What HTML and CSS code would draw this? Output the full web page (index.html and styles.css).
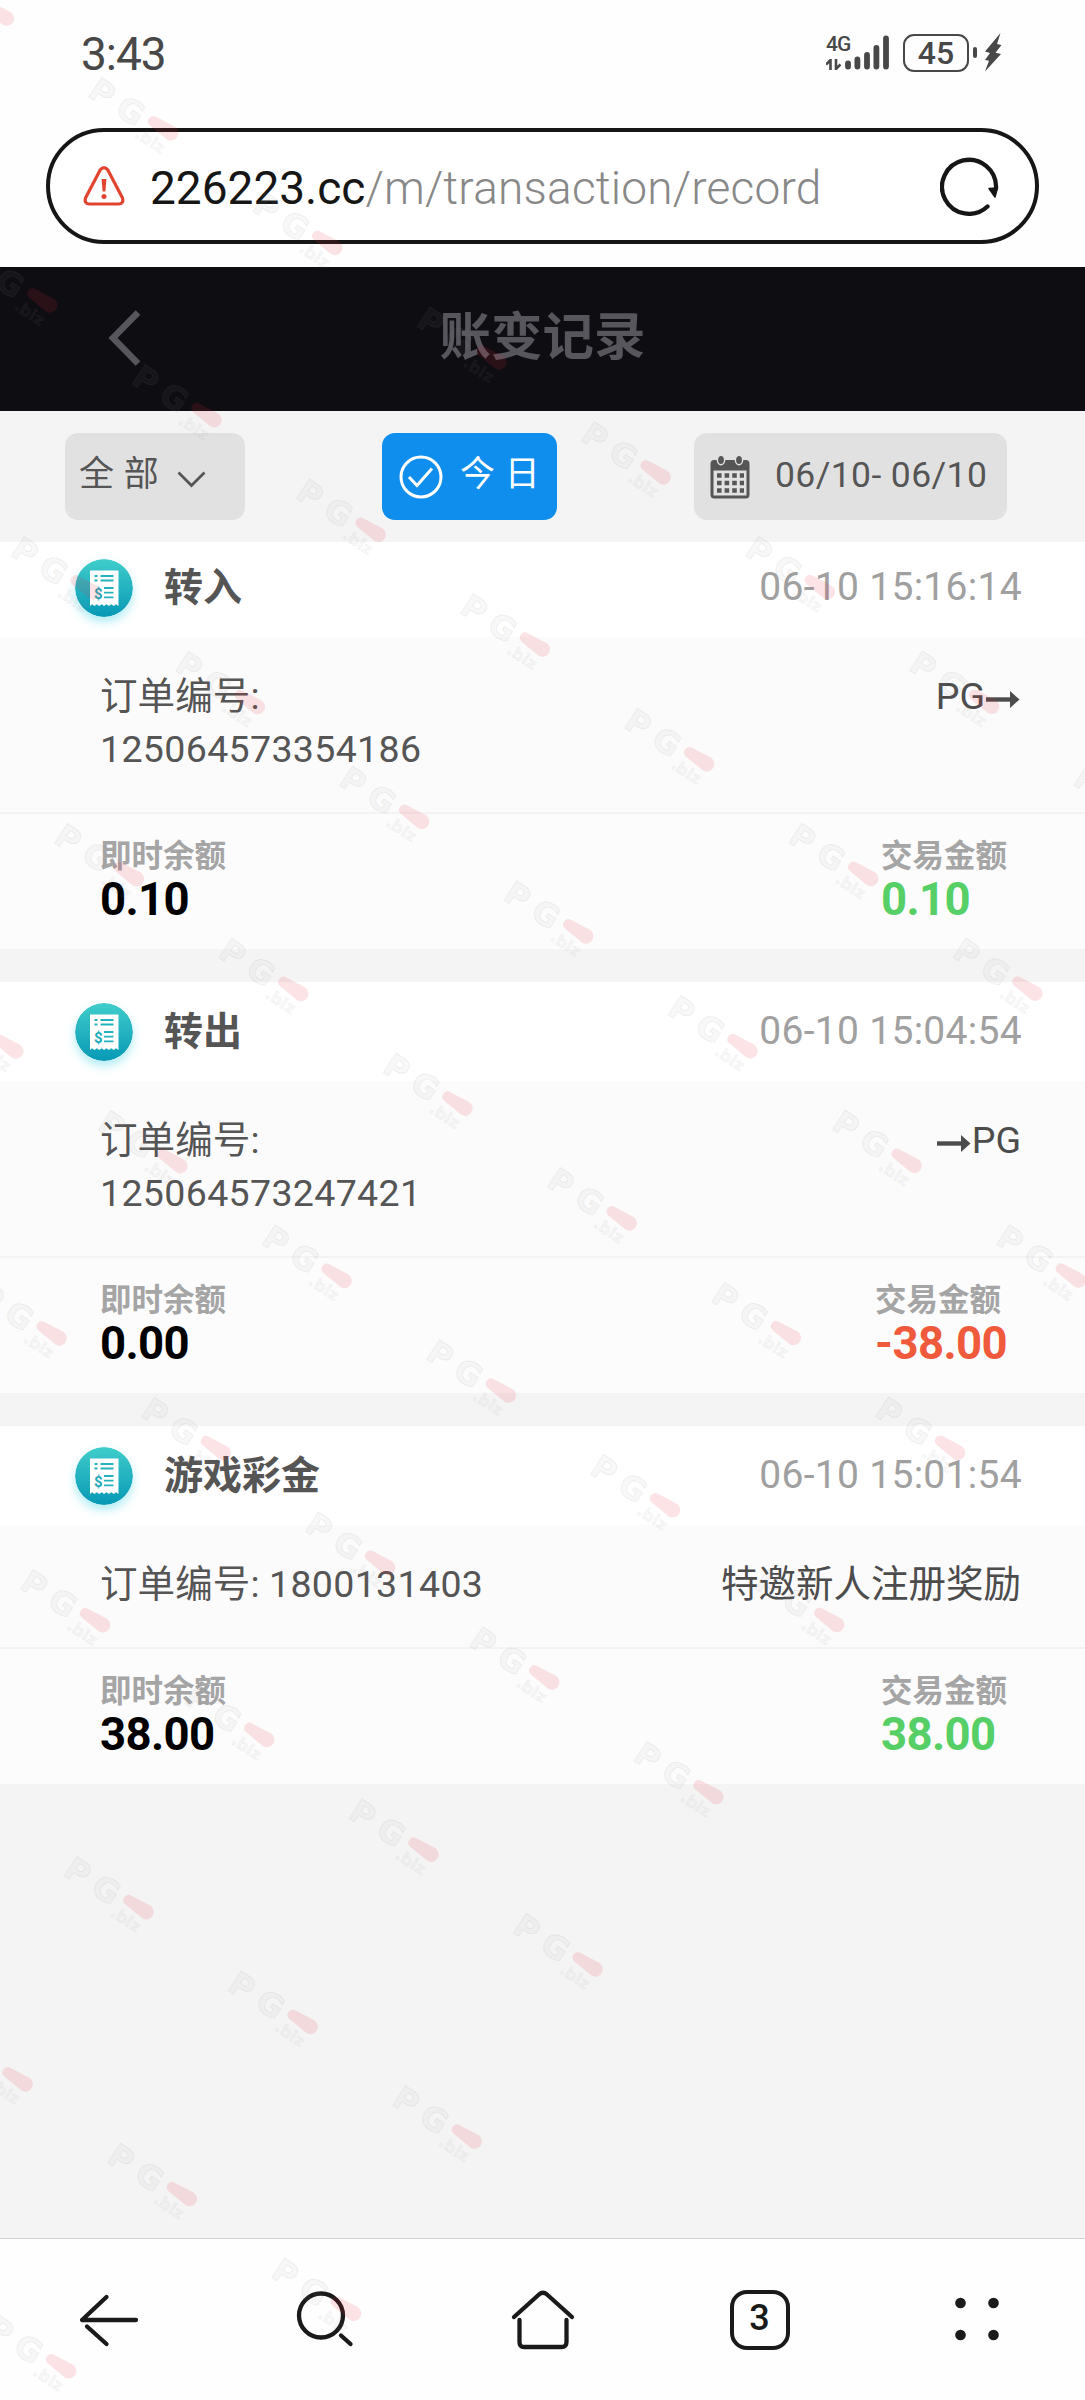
FILE: index.html
```html
<!DOCTYPE html>
<html lang="zh-CN">
<head>
    <meta charset="UTF-8">
    <meta name="viewport" content="width=device-width, initial-scale=1.0">
    <title>账变记录</title>
    <link rel="stylesheet" href="styles.css">
</head>
<body>
    <!-- shared icons -->
    <svg class="defs" width="0" height="0">
        <defs>
            <linearGradient id="teal" x1="0" y1="0" x2="0" y2="1">
                <stop offset="0" stop-color="#40cdcb"/>
                <stop offset="1" stop-color="#0799b6"/>
            </linearGradient>
            <symbol id="receipt" viewBox="0 0 58 58">
                <circle cx="29" cy="29" r="29" fill="url(#teal)"/>
                <path d="M15 11.500H43.500V47l-2.400-1.800-2.400 1.800-2.400-1.800-2.400 1.800-2.400-1.800-2.400 1.800-2.400-1.800-2.400 1.800-2.400-1.800-2.400 1.800-2.400-1.800L15 47z" fill="#fff"/>
                <path d="M19.500 17h3M25.500 17h13M19.500 21.500h3M25.500 21.500h13M29 29h9.500M29 33.700h9.500M29 38.400h9.500" stroke="#25b2bf" stroke-width="1.800"/>
                <text x="19" y="39.500" font-size="15" font-weight="700" fill="#1fa9b9">$</text>
            </symbol>
            <symbol id="arrow" viewBox="0 0 34 20">
                <path d="M0 10.500H26" stroke="currentColor" stroke-width="4.400"/>
                <path d="M24 2L33.500 10.500 24 19z" fill="currentColor"/>
            </symbol>
            <g id="mark">
                <text class="mark-big" x="-82" y="14.500">PG</text>
                <text class="mark-small" x="-20" y="23">.biz</text>
                <path class="mark-pill" d="M-12.500-5.500L9-7.500A7.500 7.500 0 0 1 9.500 7.500L-12.500 5A5.300 5.300 0 0 1-12.500-5.500z"/>
            </g>
        </defs>
    </svg>

    <div class="status">
        <span class="time">3:43</span>
        <div class="status-right">
            <div class="network">
                <span>4G</span>
                <svg width="15" height="11" viewBox="0 0 15 11" fill="none" stroke="#484848" stroke-width="2.600">
                    <path d="M4.500 11V1L0 5.500M10 0V10L14.500 5.500"/>
                </svg>
            </div>
            <svg class="signal" width="44" height="36" viewBox="0 0 44 36" stroke="#484848" stroke-width="5.800" stroke-linecap="round">
                <path d="M3 28.500V31.500M12.400 24.500V31.500M22 20V31.500M31.400 13V31.500M41 3.500V31.500"/>
            </svg>
            <div class="battery">45</div>
            <div class="battery-tip"></div>
            <svg class="bolt" width="17" height="39" viewBox="0 0 17 39" fill="#484848">
                <path d="M15.500 0L0 18.500l5 1.500L0 27l4 .8L0 38.500 16 21l-5.500-1.200L16.500 12l-4.500-1z"/>
            </svg>
        </div>
    </div>

    <div class="address">
        <div class="address-box">
            <svg width="42" height="40" viewBox="0 0 42 40" fill="none" stroke="#e2442f" stroke-width="3.200" stroke-linejoin="round">
                <path d="M17.300 3.800Q21 -.6 24.700 3.800L39.500 32Q41 37.500 36 38H6Q1 37.500 2.500 32z"/>
                <path d="M18.600 13h4.800l-1 12.500h-2.800z" fill="#e2442f" stroke="none"/>
                <circle cx="21" cy="30.500" r="2.500" fill="#e2442f" stroke="none"/>
            </svg>
            <p class="url">226223.cc<span>/m/transaction/record</span></p>
            <svg class="reload" width="60" height="60" viewBox="0 0 60 60" fill="none" stroke="#161616" stroke-width="4.300" stroke-linecap="round">
                <path d="M47.500 50.500A27 27 0 1 1 56 32"/>
                <path d="M49 32.500L57.500 32 55 41z" fill="#161616" stroke-width="1.500" stroke-linejoin="round"/>
            </svg>
        </div>
    </div>

    <header class="title-bar">
        <svg class="back" width="34" height="56" viewBox="0 0 34 56" fill="none" stroke="#57565d" stroke-width="6.500">
            <path d="M30 2.500L5 28l25 25.500"/>
        </svg>
        <h1>账变记录</h1>
    </header>

    <div class="filters">
        <div class="filter filter-type">
            <span class="spaced">全部</span>
            <svg width="29" height="17" viewBox="0 0 29 17" fill="none" stroke="#555" stroke-width="2.800">
                <path d="M1.500 1.500l13 13 13-13"/>
            </svg>
        </div>
        <div class="filter filter-today">
            <svg width="44" height="44" viewBox="0 0 44 44" fill="none" stroke="#fff" stroke-width="3">
                <circle cx="22" cy="22" r="20"/>
                <path d="M10 22l8 8.500 15-17"/>
            </svg>
            <span class="spaced">今日</span>
        </div>
        <div class="filter filter-date">
            <svg width="40" height="44" viewBox="0 0 40 44">
                <path d="M4 5H36Q39.500 5 39.500 9V39.500Q39.500 43.500 36 43.500H4Q.5 43.500 .5 39.500V9Q.5 5 4 5zM3.500 15.500V40.500H36.500V15.500z" fill="#555" fill-rule="evenodd"/>
                <path d="M7 20.500h27M7 28h27M7 35.500h27" stroke="#555" stroke-width="4.600" stroke-dasharray="4.600 3"/>
                <ellipse cx="11" cy="5" rx="3.600" ry="4.800" fill="#555" stroke="#e1e1e1" stroke-width="1.400"/>
                <ellipse cx="29" cy="5" rx="3.600" ry="4.800" fill="#555" stroke="#e1e1e1" stroke-width="1.400"/>
            </svg>
            <span>06/10- 06/10</span>
        </div>
    </div>

    <main class="records">
        <section class="record">
            <div class="record-head">
                <svg class="badge"><use href="#receipt"/></svg>
                <h2>转入</h2>
                <time>06-10 15:16:14</time>
            </div>
            <div class="record-detail">
                <p class="order">订单编号: <span>125064573354186</span></p>
                <p class="note">PG<svg class="arrow"><use href="#arrow"/></svg></p>
            </div>
            <div class="record-money">
                <div>
                    <h3>即时余额</h3>
                    <p class="amount">0.10</p>
                </div>
                <div>
                    <h3>交易金额</h3>
                    <p class="amount plus">0.10</p>
                </div>
            </div>
        </section>

        <section class="record">
            <div class="record-head">
                <svg class="badge"><use href="#receipt"/></svg>
                <h2>转出</h2>
                <time>06-10 15:04:54</time>
            </div>
            <div class="record-detail">
                <p class="order">订单编号: <span>125064573247421</span></p>
                <p class="note"><svg class="arrow"><use href="#arrow"/></svg>PG</p>
            </div>
            <div class="record-money">
                <div>
                    <h3>即时余额</h3>
                    <p class="amount">0.00</p>
                </div>
                <div>
                    <h3>交易金额</h3>
                    <p class="amount minus">-38.00</p>
                </div>
            </div>
        </section>

        <section class="record">
            <div class="record-head">
                <svg class="badge"><use href="#receipt"/></svg>
                <h2>游戏彩金</h2>
                <time>06-10 15:01:54</time>
            </div>
            <div class="record-detail">
                <p class="order">订单编号: <span>1800131403</span></p>
                <p class="note">特邀新人注册奖励</p>
            </div>
            <div class="record-money">
                <div>
                    <h3>即时余额</h3>
                    <p class="amount">38.00</p>
                </div>
                <div>
                    <h3>交易金额</h3>
                    <p class="amount plus">38.00</p>
                </div>
            </div>
        </section>
    </main>

    <nav class="toolbar">
        <div class="tool">
            <svg viewBox="0 0 80 80"><path d="M67 40H13L37.500 17M18 46.500L37.500 64"/></svg>
        </div>
        <div class="tool">
            <svg viewBox="0 0 80 80"><circle cx="35" cy="35.500" r="22"/><path d="M55 55.500l9.500 8.500"/></svg>
        </div>
        <div class="tool">
            <svg viewBox="0 0 80 80"><path d="M11 37L36 14.500Q40 11 44 14.500L69 37M16.500 40V62Q16.500 67 21 67H58.500Q63.500 67 63.500 62V40"/></svg>
        </div>
        <div class="tool">
            <span class="tabs">3</span>
        </div>
        <div class="tool">
            <svg class="dots" viewBox="0 0 80 80"><circle cx="23.500" cy="23" r="5.300"/><circle cx="56.500" cy="23" r="5.300"/><circle cx="23.500" cy="55" r="5.300"/><circle cx="56.500" cy="55" r="5.300"/></svg>
        </div>
    </nav>

    <svg class="watermark" id="watermark" width="1085" height="2400" viewBox="0 0 1085 2400"></svg>
    <script src="watermark.js"></script>
</body>
</html>
```
FILE: styles.css
```css
* {
    box-sizing: border-box;
}
body {
    position: relative;
    display: flex;
    flex-direction: column;
    width: 1085px;
    height: 2400px;
    margin: 0;
    overflow: hidden;
    background: #f4f4f4;
    color: #555;
    font-family: Roboto, "Noto Sans CJK SC", sans-serif;
}
h1, h2, h3, p {
    margin: 0;
}
svg {
    flex: none;
    display: block;
}
.defs {
    position: absolute;
}

/* phone status bar */
.status {
    display: flex;
    justify-content: space-between;
    height: 128px;
    padding: 33px 83px 0 81px;
    background: #fefefe;
    color: #484848;
}
.time {
    font-size: 46px;
    line-height: 42px;
    font-weight: 400;
    letter-spacing: -1px;
}
.status-right {
    display: flex;
    align-items: flex-start;
}
.network {
    width: 19px;
    padding-top: 3px;
    font-size: 21px;
    font-weight: 500;
    line-height: 16px;
    letter-spacing: -1px;
}
.network svg {
    margin-top: 7px;
}
.signal {
    margin: 2px 14px 0 0;
}
.battery {
    width: 66px;
    height: 38px;
    margin-top: 1px;
    border: 2.500px solid #484848;
    border-radius: 11px;
    font-size: 32px;
    font-weight: 500;
    line-height: 35px;
    text-align: center;
}
.battery-tip {
    width: 4px;
    height: 11px;
    margin: 14px 8px 0 4px;
    border-radius: 2px;
    background: #484848;
}

/* browser address */
.address {
    height: 139px;
    padding: 0 46px;
    background: #fefefe;
}
.address-box {
    display: flex;
    align-items: center;
    height: 116px;
    padding: 0 35px 0 33px;
    border: 4.500px solid #161616;
    border-radius: 58px;
    background: #fff;
}
.url {
    flex: 1;
    margin: 3px 0 0 25px;
    font-size: 46px;
    color: #161616;
    white-space: nowrap;
}
.url span {
    font-weight: 300;
    letter-spacing: .2px;
    color: #888;
}

.title-bar {
    position: relative;
    display: flex;
    align-items: center;
    justify-content: center;
    height: 144px;
    background: #0e0d12;
}
.back {
    position: absolute;
    left: 108px;
    top: 43px;
}
.title-bar h1 {
    padding-bottom: 2px;
    font-size: 51.500px;
    line-height: 60px;
    font-weight: 700;
    color: #57565d;
}

.filters {
    position: relative;
    z-index: 1;
    display: flex;
    justify-content: space-between;
    height: 131px;
    padding: 22px 78px 0 65px;
    background: #f4f4f4;
    font-size: 35px;
}
.filter {
    display: flex;
    align-items: center;
    height: 87px;
    border-radius: 13px;
    background: #e1e1e1;
}
.filter span {
    padding-bottom: 3px;
    line-height: 44px;
}
.spaced {
    letter-spacing: 9.700px;
}
.filter-type {
    width: 180px;
    padding-left: 14px;
}
.filter-type svg {
    margin: 5px 0 0 9px;
}
.filter-today {
    width: 175px;
    padding-left: 17px;
    background: #108eed;
    color: #fff;
}
.filter-today .spaced {
    margin-left: 17px;
}
.filter-date {
    width: 313px;
    padding-left: 16px;
}
.filter-date span {
    margin-left: 25px;
    font-size: 35.500px;
    letter-spacing: .4px;
    white-space: nowrap;
}

.records {
    display: flex;
    flex: 1;
    flex-direction: column;
    gap: 33px;
    margin-top: -4px;
}
.record-head {
    display: flex;
    align-items: center;
    height: 99px;
    padding: 1px 63px 0 75px;
    background: #fff;
}
.badge {
    width: 58px;
    height: 58px;
    border-radius: 50%;
    box-shadow: 0 5px 10px rgba(60, 210, 225, .4);
}
.record-head h2 {
    flex: 1;
    margin-left: 31px;
    font-size: 39px;
    line-height: 50px;
    font-weight: 700;
}
.record-head time {
    padding-bottom: 2px;
    font-size: 39px;
    letter-spacing: .3px;
    color: #a0a0a0;
}
.record-detail {
    display: flex;
    justify-content: space-between;
    padding: 33px 64px 36px 100px;
    border-bottom: 2px solid #f3f3f3;
    background: #fbfbfb;
    font-size: 37.500px;
    line-height: 53px;
}
.order {
    width: 420px;
    letter-spacing: .1px;
}
.order span {
    letter-spacing: .35px;
}
.note {
    display: flex;
    align-items: center;
    height: 53px;
    color: #4c4c4c;
}
.arrow {
    width: 34px;
    height: 20px;
    margin: 4px 1px 0;
}
.record-money {
    display: flex;
    justify-content: space-between;
    height: 135px;
    padding: 23px 78px 0 100px;
    background: #fcfcfc;
}
.record-money h3 {
    font-size: 31.500px;
    line-height: 39px;
    font-weight: 700;
    color: #a5a5a5;
}
.amount {
    font-size: 45.500px;
    line-height: 48px;
    font-weight: 700;
    letter-spacing: -.6px;
    color: #000;
}
.plus {
    color: #56cf66;
}
.minus {
    color: #f05a3c;
}

/* browser toolbar */
.toolbar {
    display: flex;
    align-items: center;
    height: 162px;
    border-top: 1px solid #d2d2d2;
    background: #fefefe;
}
.tool {
    display: flex;
    flex: 1;
    justify-content: center;
}
.tool svg {
    width: 80px;
    height: 80px;
    fill: none;
    stroke: #1a1a1a;
    stroke-width: 4.300;
    stroke-linecap: round;
    stroke-linejoin: round;
}
.tool .dots {
    fill: #1a1a1a;
    stroke: none;
}
.tabs {
    width: 60px;
    height: 60px;
    border: 4.500px solid #1a1a1a;
    border-radius: 17px;
    font-size: 36px;
    line-height: 49px;
    font-weight: 500;
    text-align: center;
    color: #1a1a1a;
}

.watermark {
    position: absolute;
    top: 0;
    left: 0;
    z-index: 5;
    pointer-events: none;
}
.mark-big, .mark-small {
    fill: rgba(150, 150, 150, .06);
    stroke: rgba(130, 130, 130, .12);
    stroke-width: 1;
    font-family: "DejaVu Sans", sans-serif;
    font-weight: 700;
}
.mark-big {
    font-size: 32px;
    letter-spacing: 9px;
}
.mark-small {
    font-size: 16px;
    stroke-width: .6;
}
.mark-pill {
    fill: rgba(230, 35, 65, .13);
}
```
FILE: watermark.js
```javascript
// slanted watermark rows: [first column, last column]
const rows = [[-1, 6], [-1, 5], [-1, 5], [-1, 4], [-2, 3], [-2, 2], [-2, 1], [-2, 0], [-3, -1], [-3, -3]];
const layer = document.getElementById('watermark');

rows.forEach(([first, last], row) => {
    for (let col = first; col <= last; col++) {
        const x = 163 + 164.2 * col + 43.4 * row;
        const y = 128 + 114.7 * col + 286.9 * row;
        const mark = document.createElementNS('http://www.w3.org/2000/svg', 'use');
        mark.setAttribute('href', '#mark');
        mark.setAttribute('transform', `translate(${x} ${y}) rotate(33)`);
        layer.appendChild(mark);
    }
});
```
